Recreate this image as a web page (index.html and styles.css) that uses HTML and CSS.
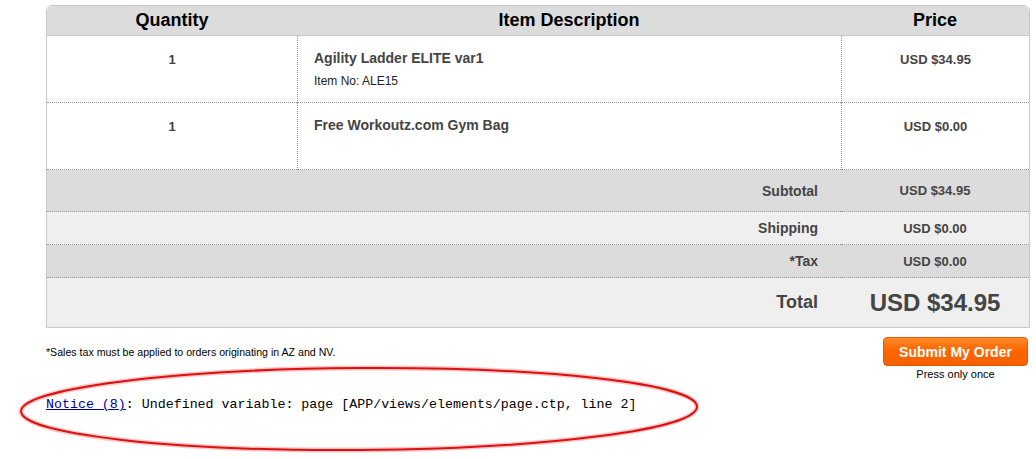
FILE: index.html
```html
<!DOCTYPE html>
<html lang="en">
<head>
    <meta charset="UTF-8">
    <title>Review Order</title>
    <link rel="stylesheet" href="styles.css">
</head>
<body>
    <table class="cart">
        <tr class="head">
            <th class="col-qty">Quantity</th>
            <th class="col-desc">Item Description</th>
            <th class="col-price">Price</th>
        </tr>
        <tr class="item">
            <td class="qty">1</td>
            <td class="desc">
                <div class="name">Agility Ladder ELITE var1</div>
                <div class="sku">Item No: ALE15</div>
            </td>
            <td class="price">USD $34.95</td>
        </tr>
        <tr class="item">
            <td class="qty">1</td>
            <td class="desc">
                <div class="name">Free Workoutz.com Gym Bag</div>
            </td>
            <td class="price">USD $0.00</td>
        </tr>
        <tr class="sum dark subtotal">
            <td class="label" colspan="2">Subtotal</td>
            <td class="value">USD $34.95</td>
        </tr>
        <tr class="sum light shipping">
            <td class="label" colspan="2">Shipping</td>
            <td class="value">USD $0.00</td>
        </tr>
        <tr class="sum dark tax">
            <td class="label" colspan="2">*Tax</td>
            <td class="value">USD $0.00</td>
        </tr>
        <tr class="sum light total">
            <td class="label" colspan="2">Total</td>
            <td class="value">USD $34.95</td>
        </tr>
    </table>

    <div class="below">
        <p class="note">*Sales tax must be applied to orders originating in AZ and NV.</p>
        <div class="submit">
            <button type="button">Submit My Order</button>
            <span>Press only once</span>
        </div>
    </div>

    <div class="notice">
        <svg class="circle" width="700" height="96" viewBox="0 0 700 96">
            <ellipse cx="359" cy="47" rx="338" ry="41" fill="none" stroke="#f2a0a0" stroke-width="5" opacity="0.6" transform="rotate(-0.4 359 47)"/>
            <ellipse cx="359" cy="47" rx="338" ry="41" fill="none" stroke="#dd1010" stroke-width="2" transform="rotate(-0.4 359 47)"/>
        </svg>
        <pre><a href="#">Notice (8)</a>: Undefined variable: page [APP/views/elements/page.ctp, line 2]</pre>
    </div>
</body>
</html>
```

FILE: styles.css
```css
body {
    margin: 0;
    font-family: "Liberation Sans", Arial, sans-serif;
    color: #444;
    background: #fff;
}
.cart {
    width: 984px;
    margin: 5px 0 0 46px;
    border-collapse: separate;
    border-spacing: 0;
    border: 1px solid #c8c8c8;
    border-radius: 6px 6px 0 0;
}
.head {
    height: 30px;
}
.head th {
    padding: 0;
    background: #dcdcdc;
    border-bottom: 1px solid #c8c8c8;
    color: #000;
    font-size: 18px;
    font-weight: bold;
}
.head th:first-child {
    border-top-left-radius: 5px;
}
.head th:last-child {
    border-top-right-radius: 5px;
}
.col-qty {
    width: 250px;
}
.col-price {
    width: 188px;
}
.item {
    height: 67px;
}
.item td {
    padding: 16px 0 0;
    vertical-align: top;
    border-bottom: 1px dotted #999;
    font-size: 13px;
    font-weight: bold;
}
.item td + td {
    border-left: 1px dotted #999;
}
.qty,
.price {
    text-align: center;
}
.item .desc {
    padding: 14px 16px 0;
}
.name {
    font-size: 14px;
}
.sku {
    margin-top: 8px;
    font-size: 12px;
    font-weight: normal;
    color: #222;
}
.sum td {
    padding: 0;
    vertical-align: middle;
    font-size: 14px;
    font-weight: bold;
}
.sum .label {
    text-align: right;
    padding-right: 23px;
}
.sum .value {
    text-align: center;
    font-size: 13px;
}
.dark {
    background: #dcdcdc;
}
.light {
    background: #efefef;
}
.subtotal td,
.shipping td,
.tax td {
    border-bottom: 1px dotted #999;
}
.subtotal {
    height: 42px;
}
.shipping,
.tax {
    height: 33px;
}
.total {
    height: 49px;
}
.total .label {
    font-size: 18px;
}
.total .value {
    font-size: 24px;
}
.below {
    display: flex;
    justify-content: space-between;
    align-items: flex-start;
    margin: 9px 8px 0 46px;
}
.note {
    margin: 9px 0 0;
    font-size: 10.6px;
    color: #000;
}
.submit {
    display: flex;
    flex-direction: column;
    align-items: center;
    gap: 2px;
}
.submit button {
    width: 145px;
    height: 29px;
    padding: 0;
    border: 1px solid #e05a00;
    border-radius: 4px;
    background: linear-gradient(#ff8a2a, #ff6600 45%, #f55f00);
    color: #fff;
    font-family: "Liberation Sans", Arial, sans-serif;
    font-size: 14px;
    font-weight: bold;
    cursor: pointer;
}
.submit span {
    font-size: 11px;
    color: #000;
}
.notice {
    position: relative;
    height: 96px;
    margin-top: -18px;
    box-sizing: border-box;
    padding: 35px 0 0 46px;
}
.notice pre {
    position: relative;
    margin: 0;
    font-family: "Liberation Mono", "Courier New", monospace;
    font-size: 13.3px;
    color: #000;
}
.notice a {
    color: #0000a0;
}
.circle {
    position: absolute;
    left: 0;
    top: 0;
    pointer-events: none;
}
```
